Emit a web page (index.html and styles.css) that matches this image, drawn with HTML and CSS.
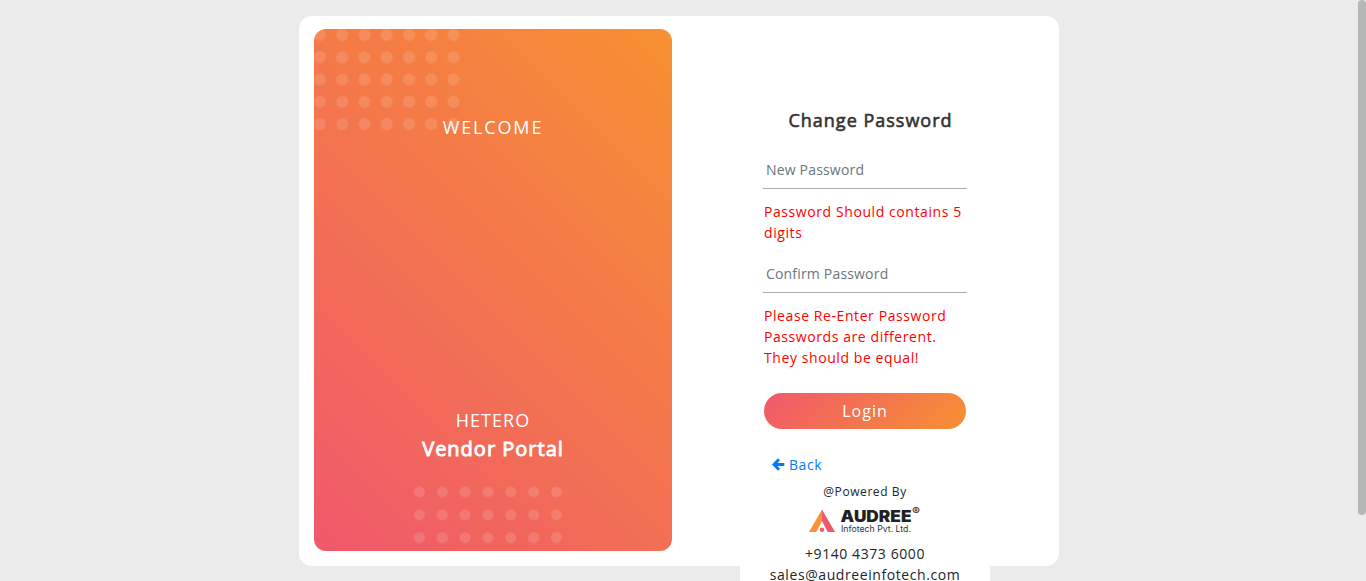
FILE: index.html
```html
<!DOCTYPE html>
<html lang="en">
<head>
<meta charset="utf-8">
<title>Vendor Portal</title>
<link rel="stylesheet" href="styles.css">
</head>
<body>
<main class="card">
  <section class="panel">
    <svg class="dots dots-top" width="152" height="106" aria-hidden="true">
      <defs><pattern id="dotA" width="22.25" height="22.3" patternUnits="userSpaceOnUse" y="-5.2" x="-5.1"><circle cx="11.1" cy="11.15" r="6"/></pattern></defs>
      <rect width="152" height="106" fill="url(#dotA)"/>
    </svg>
    <p class="welcome">WELCOME</p>
    <div class="brand">
      <p class="company">HETERO</p>
      <h1 class="portal">Vendor Portal</h1>
    </div>
    <svg class="dots dots-bottom" width="160" height="68" aria-hidden="true">
      <defs><pattern id="dotB" width="22.85" height="22.9" patternUnits="userSpaceOnUse" x="-5" y="-2.5"><circle cx="11.4" cy="11.4" r="5.5"/></pattern></defs>
      <rect width="160" height="68" fill="url(#dotB)"/>
    </svg>
  </section>
  <section class="side">
    <h2 class="title">Change Password</h2>
    <form class="form">
      <input class="field" type="password" placeholder="New Password">
      <p class="error">Password Should contains 5 digits</p>
      <input class="field" type="password" placeholder="Confirm Password">
      <p class="error error-last">Please Re-Enter Password<br>Passwords are different.<br>They should be equal!</p>
      <button class="login" type="button">Login</button>
    </form>
    <a class="back" href="#"><svg width="13" height="13" viewBox="0 0 13 13" aria-hidden="true"><path d="M7 1.3 2 6.500l5 5.200M2.500 6.500H12.300" fill="none" stroke="#007bff" stroke-width="2.9"/></svg>Back</a>
    <footer class="footer">
      <p class="powered">@Powered By</p>
      <svg class="logo" width="112" height="30" viewBox="0 0 112 30">
        <path d="M13 4.500 0 27h7.300L13 16z" fill="#f99235"/>
        <path d="M13 4.500 26 27h-7.300L13 16z" fill="#f0586b"/>
        <circle cx="13" cy="24.800" r="2.200" fill="#f0586b"/>
        <text class="logo-name" x="31.500" y="16.500" textLength="71" lengthAdjust="spacingAndGlyphs">AUDREE</text>
        <text class="logo-mark" x="103" y="9.500" textLength="8" lengthAdjust="spacingAndGlyphs">®</text>
        <text class="logo-sub" x="32" y="27" textLength="70" lengthAdjust="spacingAndGlyphs">Infotech Pvt. Ltd.</text>
      </svg>
      <p class="contact">+9140 4373 6000</p>
      <p class="contact">sales@audreeinfotech.com</p>
    </footer>
  </section>
</main>
<div class="scrollbar"></div>
</body>
</html>
```
FILE: styles.css
```css
* { box-sizing: border-box; }
html { overflow: hidden; }
body {
  margin: 0;
  height: 581px;
  padding-top: 16px;
  overflow: hidden;
  background: #ebebeb;
  color: #212529;
  font: 14px/21px "Open Sans", "Noto Sans", sans-serif;
  letter-spacing: .580px;
}
p, h1, h2 { margin: 0; }
.card {
  width: 760px;
  height: 550px;
  margin-left: 299px;
  padding: 13px 15px 15px;
  display: flex;
  gap: 68px;
  background: #fff;
  border-radius: 13px;
}
.panel {
  position: relative;
  width: 358px;
  height: 522px;
  padding: 85px 0 87px;
  display: flex;
  flex-direction: column;
  justify-content: space-between;
  overflow: hidden;
  border-radius: 12px;
  background: linear-gradient(225deg, #f79131, #f0586c);
  color: #fff;
  text-align: center;
}
.dots { position: absolute; }
.dots circle { fill: #fff; }
.dots-top { left: 0; top: 0; opacity: .12; }
.dots-bottom { left: 99px; top: 454px; opacity: .13; }
.welcome { position: relative; font-size: 18px; line-height: 26px; letter-spacing: 1.850px; }
.company { font-size: 18px; line-height: 26px; letter-spacing: 1px; padding-bottom: 1px; }
.portal {
  font-size: 20px;
  font-weight: 400;
  line-height: 30px;
  letter-spacing: 1px;
  -webkit-text-stroke: 0.900px #fff;
}
.side { width: 250px; padding-top: 78px; }
.title {
  padding-left: 11px;
  color: #333;
  font-size: 18px;
  font-weight: 400;
  line-height: 26px;
  letter-spacing: 1px;
  text-align: center;
  -webkit-text-stroke: 0.600px #333;
}
.form { padding: 20px 24px 0; }
.field {
  display: block;
  width: 204px;
  height: 36px;
  margin: 0 0 12px -1px;
  padding: 0 3px 2px;
  border: 0;
  border-bottom: 1px solid #aaa;
  background: transparent;
  font: 14px "Open Sans", sans-serif;
  letter-spacing: .180px;
}
.field::placeholder { color: #6c757d; opacity: 1; }
.error { margin-bottom: 14px; color: #f00; }
.error-last { margin-bottom: 25px; }
.login {
  display: block;
  width: 202px;
  height: 36px;
  padding: 0;
  border: 0;
  border-radius: 18px;
  background: linear-gradient(135deg, #f0586c, #f79131);
  color: #fff;
  font: 16px "Open Sans", sans-serif;
  letter-spacing: 1px;
}
.back {
  display: flex;
  align-items: center;
  gap: 4px;
  padding: 25px 32px 0;
  color: #007bff;
  text-decoration: none;
}
.footer {
  height: 106px;
  padding-top: 7px;
  background: #fff;
  text-align: center;
}
.powered { font-size: 12px; line-height: 20px; }
.logo { display: block; margin: 3px 0 8px 69px; }
.logo-name { font: 900 15.500px Inter, sans-serif; letter-spacing: 0; fill: #222; }
.logo-sub { font: 8.500px Inter, sans-serif; letter-spacing: 0; fill: #333; }
.logo-mark { font: 600 11px Inter, sans-serif; letter-spacing: 0; fill: #222; }
.scrollbar {
  position: absolute;
  right: 0;
  top: 0;
  width: 8px;
  height: 515px;
  border-radius: 4px;
  background: #b5b7b6;
}
```
